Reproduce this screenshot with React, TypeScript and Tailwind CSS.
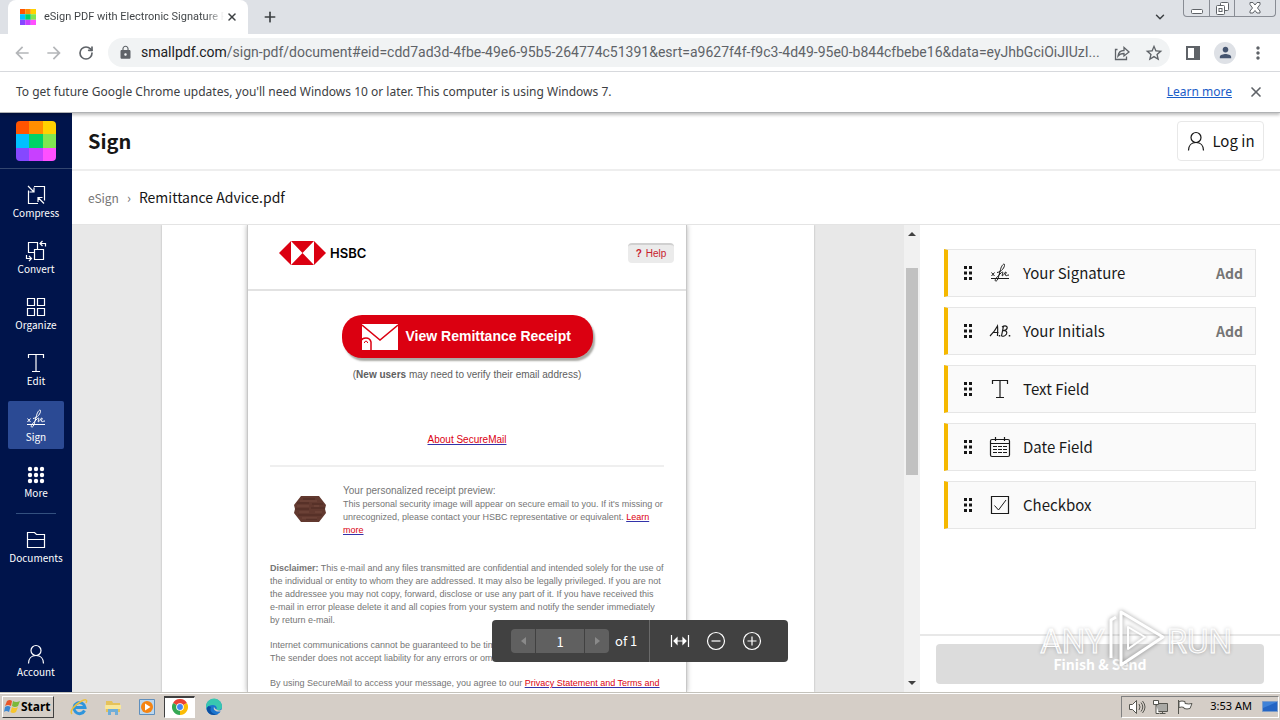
import type { ReactNode } from 'react';
import { ChevronDown, Plus, RotateCw, X } from 'lucide-react';
import { MdArrowBack, MdArrowForward, MdLock, MdMoreVert, MdPerson, MdStarBorder } from 'react-icons/md';

const ICON = {
  fill: 'none',
  stroke: 'currentColor',
  strokeWidth: 1.2,
  viewBox: '0 0 20 20',
};

const CompressIcon = () => (
  <svg {...ICON} className="h-5 w-5">
    <path d="M8 1.500h10.500v14M12 18.500H2.500V5.500M2 1l6 6M8 2.500V7H3.500M18 18.500l-6-6M12 17v-4.500h4.500" />
  </svg>
);

const ConvertIcon = () => (
  <svg {...ICON} viewBox="0 0 22 22" className="h-[22px] w-[22px]">
    <path d="M9.500 12.500H3.500v-10h9v7M9.500 9.500h9v10h-9zM20.500 6.500v-3h-5M17.500 1l-2.500 2.500L17.500 6M1.500 15v3.500H6M4 16l2.500 2.500L4 21" />
  </svg>
);

const OrganizeIcon = () => (
  <svg {...ICON} className="h-5 w-5">
    <path d="M1.500 1.500h7v7h-7zM11.500 1.500h7v7h-7zM1.500 11.500h7v7h-7zM11.500 11.500h7v7h-7z" />
  </svg>
);

const TextIcon = () => (
  <svg {...ICON} className="h-5 w-5">
    <path d="M2.500 5V1.500h15V5M10 1.500v17M6 18.500h8" />
  </svg>
);

const SignIcon = () => (
  <svg {...ICON} strokeWidth={1} className="h-5 w-5">
    <path d="M1 15.500h18M1.500 9.500l3 3.500M4.500 9.500l-3 3.500" />
    <path d="M7 9.500c4.500-.5 8-5.500 7.500-8-.5-1.500-3 1-4 5L8.500 14c-.7 3-2 4.500-3 4-1-1 .5-3 3-5.500l3-3c1.500-1 1.800 0 1 1.500s-.5 2 .5 1.500c1.500-1 2-4 3-3.500s-1.500 3-.3 3.500 1.300-.5 3.300-.5" />
  </svg>
);

const MoreIcon = () => (
  <svg viewBox="0 0 20 20" fill="currentColor" className="h-5 w-5">
    {[4, 10, 16].map((y) => [4, 10, 16].map((x) => <circle key={`${x}-${y}`} cx={x} cy={y} r="2.200" />))}
  </svg>
);

const FolderIcon = () => (
  <svg {...ICON} className="h-5 w-5">
    <path d="M1.500 17.500v-15h7l2 2h8v13zM1.500 9.500h17" />
  </svg>
);

const UserIcon = () => (
  <svg {...ICON} className="h-5 w-5">
    <circle cx="10" cy="6.500" r="5" />
    <path d="M2.500 19.500c0-5 3-8 7.500-8s7.500 3 7.500 8" />
  </svg>
);

const InitialsIcon = () => (
  <svg {...ICON} viewBox="0 0 22 20" className="h-5 w-[22px]">
    <path d="M1 15C4 12 7 8 8.500 5c.5 4 0 7 0 10M3.500 11.500h6M14.500 5l-2 10M13 6c3-2 6-1 5 1.500-.5 1.500-2.500 2-4 2 3 0 4.500 1 3.500 3.500-1 2-3.500 2.500-5 2" />
    <path d="M10.500 14v1.500M20.500 14v1.500" strokeWidth="1.500" />
  </svg>
);

const DateIcon = () => (
  <svg {...ICON} viewBox="0 0 22 22" className="h-[22px] w-[22px]">
    <rect x="1.500" y="3.500" width="19" height="17" rx="1.500" />
    <path d="M1.500 7.500h19M6.500 1v4M15.500 1v4" />
    <path d="M4 10.500h14M4 13.500h14M4 16.500h14" strokeDasharray="4 1" />
  </svg>
);

const CheckIcon = () => (
  <svg {...ICON} className="h-5 w-5">
    <path d="M1.500 1.500h17v17h-17z" />
    <path d="M4.500 10.500l4 4.500 7.500-10" strokeWidth="1" />
  </svg>
);

const SmallpdfLogo = ({ className }: { className: string }) => (
  <svg viewBox="0 0 40 40" className={className}>
    <path fill="#ff5400" d="M0 0h13v13H0z" />
    <path fill="#ff8e00" d="M13 0h14v13H13z" />
    <path fill="#ffd200" d="M27 0h13v13H27z" />
    <path fill="#00c0ff" d="M0 13h13v14H0z" />
    <path fill="#00d267" d="M13 13h14v14H13z" />
    <path fill="#81e650" d="M27 13h13v14H27z" />
    <path fill="#8548ff" d="M0 27h13v13H0z" />
    <path fill="#c840ff" d="M13 27h14v13H13z" />
    <path fill="#ff50ff" d="M27 27h13v13H27z" />
  </svg>
);

function TabStrip() {
  return (
    <div className="flex h-[34px] items-start bg-[#dee1e6] pl-2">
      <div className="flex h-full w-60 items-center rounded-t-lg bg-white pr-2 pl-3">
        <SmallpdfLogo className="h-4 w-4 shrink-0" />
        <span className="ml-2 flex-1 overflow-hidden bg-linear-to-r from-[#3c4043] from-90% to-transparent bg-clip-text text-[11px] whitespace-nowrap text-transparent">
          eSign PDF with Electronic Signature F
        </span>
        <button aria-label="Close tab" className="p-0.5 text-[#3c4043]">
          <X size={12} strokeWidth={3} />
        </button>
      </div>
      <button aria-label="New tab" className="ml-3 flex h-[34px] w-5 items-center justify-center text-[#3c4043]">
        <Plus size={16} strokeWidth={2.5} />
      </button>
      <button aria-label="Search tabs" className="mr-4 ml-auto flex h-[34px] items-center text-[#3c4043]">
        <ChevronDown size={14} strokeWidth={2.5} />
      </button>
      <div className="mr-1 flex h-[17px] w-[93px] rounded-b border border-t-0 border-[#888c94] text-[#5f6368]">
        <button aria-label="Minimize" className="flex w-[26px] items-end justify-center border-r border-[#888c94] pb-0.5">
          <svg viewBox="0 0 12 5" className="h-[5px] w-3" fill="#fff" stroke="currentColor">
            <rect x=".5" y=".5" width="11" height="4" rx="1" />
          </svg>
        </button>
        <button aria-label="Restore" className="flex w-[25px] items-center justify-center border-r border-[#888c94]">
          <svg viewBox="0 0 13 13" className="h-[13px] w-[13px]" fill="#fff" stroke="currentColor">
            <rect x="4.500" y=".5" width="8" height="8" rx="1" />
            <rect x=".5" y="3.500" width="8" height="9" rx="1" />
            <rect x="3" y="6.500" width="3" height="3" />
          </svg>
        </button>
        <button aria-label="Close" className="flex flex-1 items-center justify-center">
          <svg viewBox="0 0 12 12" className="h-3 w-3" fill="#fff" stroke="currentColor">
            <path d="M1 .5h3l2 2.500 2-2.500h3v2L8.500 6 11 9v2H8L6 8.500 4 11H1V9l2.500-3L1 2.500z" />
          </svg>
        </button>
      </div>
    </div>
  );
}

function AddressBar() {
  return (
    <div className="flex h-[38px] items-center border-b border-[#dadce0] bg-white px-3 text-[#5f6368]">
      <button aria-label="Back" className="text-[#b4b6b9]"><MdArrowBack size={20} /></button>
      <button aria-label="Forward" className="ml-3 text-[#b4b6b9]"><MdArrowForward size={20} /></button>
      <button aria-label="Reload" className="ml-3.5"><RotateCw size={16} strokeWidth={2.5} /></button>
      <label className="ml-3.5 flex h-[29px] min-w-0 flex-1 items-center rounded-full bg-[#f1f3f4] pr-1.5 pl-2.5 text-[14px]">
        <MdLock size={15} className="shrink-0" />
        <span className="ml-2 text-[#202124]">smallpdf.com</span>
        <input
          type="text"
          aria-label="Address"
          className="min-w-0 flex-1 truncate bg-transparent outline-none"
          defaultValue="/sign-pdf/document#eid=cdd7ad3d-4fbe-49e6-95b5-264774c51391&esrt=a9627f4f-f9c3-4d49-95e0-b844cfbebe16&data=eyJhbGciOiJIUzI..."
        />
        <button aria-label="Share" className="ml-2">
          <svg viewBox="0 0 16 16" className="h-4 w-4" fill="none" stroke="currentColor" strokeWidth="1.300">
            <path d="M3.500 4.500H1.500v10h11v-3M4 11c.5-4 3-5.500 6-5.500V2.500L15 7l-5 4V8.500c-3 0-4.500.5-6 2.500z" />
          </svg>
        </button>
        <button aria-label="Bookmark" className="ml-3.5"><MdStarBorder size={20} /></button>
      </label>
      <button aria-label="Side panel" className="ml-4">
        <svg viewBox="0 0 14 14" className="h-3.5 w-3.5">
          <path d="M1 1h12v12H1z" fill="none" stroke="currentColor" strokeWidth="2" />
          <path d="M8 1h5v12H8z" fill="currentColor" />
        </svg>
      </button>
      <button aria-label="Profile" className="ml-3.5 flex h-[22px] w-[22px] items-center justify-center rounded-full bg-[#dee1e6] text-[#44546f]">
        <MdPerson size={17} />
      </button>
      <button aria-label="Menu" className="ml-3"><MdMoreVert size={20} /></button>
    </div>
  );
}

function InfoBar() {
  return (
    <div className="relative z-10 flex h-[41px] items-center border-b border-[#b0b2b4] bg-white px-4 font-['Noto_Sans',sans-serif] text-[12px] text-[#3c4043] shadow-[0_2px_3px_rgba(0,0,0,0.25)]">
      <span>To get future Google Chrome updates, you'll need Windows 10 or later. This computer is using Windows 7.</span>
      <a href="#learn" className="ml-auto text-[#1a5dc8] underline">Learn more</a>
      <button aria-label="Dismiss" className="ml-4 text-[#5f6368]"><X size={16} strokeWidth={2.5} /></button>
    </div>
  );
}

function NavItem({ icon, label, active }: { icon: ReactNode; label: string; active?: boolean }) {
  return (
    <a
      href="#tool"
      className={`flex h-12 w-14 flex-col items-center rounded-xs pt-2 text-[10px] leading-4 ${active ? 'bg-[#2b4a94]' : ''}`}
    >
      <span className="flex h-5 items-center">{icon}</span>
      <span>{label}</span>
    </a>
  );
}

function Sidebar() {
  return (
    <nav className="flex w-[72px] shrink-0 flex-col items-center bg-[#00144b] pb-2 text-white">
      <div className="flex h-14 w-full shrink-0 items-center justify-center border-b border-[#33466f]">
        <SmallpdfLogo className="h-10 w-10 rounded" />
      </div>
      <div className="mt-2 flex flex-col gap-2">
        <NavItem icon={<CompressIcon />} label="Compress" />
        <NavItem icon={<ConvertIcon />} label="Convert" />
        <NavItem icon={<OrganizeIcon />} label="Organize" />
        <NavItem icon={<TextIcon />} label="Edit" />
        <NavItem icon={<SignIcon />} label="Sign" active />
        <NavItem icon={<MoreIcon />} label="More" />
      </div>
      <div className="my-2 h-px w-10 shrink-0 bg-[#33507f]" />
      <NavItem icon={<FolderIcon />} label="Documents" />
      <div className="mt-auto">
        <NavItem icon={<UserIcon />} label="Account" />
      </div>
    </nav>
  );
}

const MAIL_LINK = 'text-[#db0011] underline decoration-[#3333aa]';

function Mail() {
  return (
    <article className="mx-auto h-full w-[440px] overflow-hidden border-x border-[#c8c8c8] bg-white font-['Liberation_Sans',sans-serif] text-[9px] leading-[13px] text-[#757575] shadow-[0_0_5px_rgba(0,0,0,0.3)]">
      <header className="flex h-[66px] items-center border-b-2 border-[#e2e2e2] pr-3 pb-2 pl-[31px]">
        <svg viewBox="0 0 47 24" className="h-6 w-[47px]">
          <path fill="#db0011" d="M0 12L12 0h23l12 12-12 12H12z" />
          <path fill="#fff" d="M12 0v24l11.500-12zM35 0v24L23.500 12z" />
        </svg>
        <span className="ml-1 font-['Inter',sans-serif] text-[13px] font-semibold text-black">HSBC</span>
        <button className="ml-auto flex h-5 w-[46px] items-center justify-center gap-1 rounded-sm border-t-2 border-[#d0d0d0] bg-[#ebebeb] pb-0.5 text-[10px] text-[#c8202c]">
          <b>?</b> Help
        </button>
      </header>

      <div className="flex flex-col items-center">
        <button className="mt-6 flex h-[43px] w-[251px] items-center rounded-[20px] bg-[#db0011] pl-5 text-[14px] font-bold text-white shadow-[2px_3px_2px_#aaaaa5]">
          <svg viewBox="0 0 36 26" className="mr-2 h-[26px] w-9">
            <path fill="#fff" d="M0 0h36v26H0z" />
            <path fill="none" stroke="#db0011" strokeWidth="1.500" d="M0 1l18 15L36 1" />
            <path fill="#fff" stroke="#db0011" strokeWidth="1.500" d="M-1 27V17q1-3 5-3t5 4v9z" />
            <path fill="none" stroke="#db0011" d="M2.500 19v-1q1.500-2 3 0v1" />
          </svg>
          View Remittance Receipt
        </button>
        <p className="mt-2.5 text-[10px] text-[#606060]">
          (<b>New users</b> may need to verify their email address)
        </p>
        <a href="#about" className={`mt-[52px] text-[10px] ${MAIL_LINK}`}>About SecureMail</a>
      </div>

      <div className="mx-[22px] mt-[19px] border-t-2 border-[#efefef] pt-[17px]">
        <div className="flex items-start">
          <svg viewBox="0 0 32 26" className="mt-3 ml-6 h-[26px] w-8">
            <path fill="#62392f" d="M7 0h18l7 9-1 4 1 4-7 9H7l-7-9 1-4-1-4z" />
            <path fill="none" stroke="#4c2a22" d="M3 7h12M18 8h11M1 13h14M17 12h14M4 19h24M9 3h12M12 23h11" />
            <path fill="none" stroke="#744a3f" d="M6 5h17M3 10h12M20 10h5M5 16h10M21 16h7M8 22h15" />
          </svg>
          <p className="ml-[17px] whitespace-nowrap">
            <span className="text-[10px]">Your personalized receipt preview:</span>
            <br />
            This personal security image will appear on secure email to you. If it's missing or
            <br />
            unrecognized, please contact your HSBC representative or equivalent.{' '}
            <a href="#preview" className={MAIL_LINK}>Learn<br />more</a>
          </p>
        </div>
        <p className="mt-[25px] whitespace-nowrap">
          <b>Disclaimer:</b> This e-mail and any files transmitted are confidential and intended solely for the use of
          <br />
          the individual or entity to whom they are addressed. It may also be legally privileged. If you are not
          <br />
          the addressee you may not copy, forward, disclose or use any part of it. If you have received this
          <br />
          e-mail in error please delete it and all copies from your system and notify the sender immediately
          <br />
          by return e-mail.
        </p>
        <p className="mt-3 whitespace-nowrap">
          Internet communications cannot be guaranteed to be timely, secure, error or virus-free.
          <br />
          The sender does not accept liability for any errors or omissions.
        </p>
        <p className="mt-3 whitespace-nowrap">
          By using SecureMail to access your message, you agree to our{' '}
          <a href="#terms" className={MAIL_LINK}>Privacy Statement and Terms and</a>
        </p>
      </div>
    </article>
  );
}

function Viewer() {
  return (
    <div className="flex min-w-0 flex-1 bg-[#e8e8e8]">
      <div className="flex flex-1 justify-center overflow-hidden">
        <div className="h-full w-[652px] bg-white pr-[42px] shadow-[0_0_2px_rgba(0,0,0,0.25)]">
          <Mail />
        </div>
      </div>
      <div className="flex w-4 flex-col items-center bg-[#f1f1f1] py-1.5">
        <svg viewBox="0 0 8 5" className="h-[5px] w-2"><path fill="#404040" d="M0 5l4-4 4 4z" /></svg>
        <div className="mt-8 h-[207px] w-3 bg-[#c1c1c1]" />
        <svg viewBox="0 0 8 5" className="mt-auto h-[5px] w-2"><path fill="#404040" d="M0 0l4 4 4-4z" /></svg>
      </div>
    </div>
  );
}

function PageControls() {
  return (
    <div className="absolute inset-x-0 bottom-[30px] flex justify-center">
      <div className="flex h-[42px] w-[296px] items-center rounded bg-[#414141] pl-[19px] text-[13px] text-white">
        <button aria-label="Previous page" className="flex h-6 w-6 items-center justify-center rounded-l-sm bg-[#606060]">
          <svg viewBox="0 0 5 8" className="h-2 w-[5px]"><path fill="#8a8a8a" d="M5 0v8L0 4z" /></svg>
        </button>
        <input aria-label="Page" defaultValue="1" className="mx-px h-6 w-12 bg-[#606060] text-center outline-none" />
        <button aria-label="Next page" className="flex h-6 w-6 items-center justify-center rounded-r-sm bg-[#606060]">
          <svg viewBox="0 0 5 8" className="h-2 w-[5px]"><path fill="#8a8a8a" d="M0 0v8l5-4z" /></svg>
        </button>
        <span className="ml-1.5 w-7">of 1</span>
        <div className="mr-5 ml-1.5 h-full w-px bg-[#6a6a6a]" />
        <button aria-label="Fit width">
          <svg viewBox="0 0 20 20" className="h-5 w-5" fill="none" stroke="currentColor" strokeWidth="1.200">
            <path d="M1.500 4v12M18.500 4v12M4 10h12" />
            <path fill="currentColor" d="M7 7v6l-3-3zM13 7v6l3-3z" />
          </svg>
        </button>
        <button aria-label="Zoom out" className="ml-4">
          <svg viewBox="0 0 20 20" className="h-5 w-5" fill="none" stroke="currentColor" strokeWidth="1.200">
            <circle cx="10" cy="10" r="8.500" />
            <path d="M5.500 10h9" />
          </svg>
        </button>
        <button aria-label="Zoom in" className="ml-4">
          <svg viewBox="0 0 20 20" className="h-5 w-5" fill="none" stroke="currentColor" strokeWidth="1.200">
            <circle cx="10" cy="10" r="8.500" />
            <path d="M5.500 10h9M10 5.500v9" />
          </svg>
        </button>
      </div>
    </div>
  );
}

function FieldCard({ icon, label, add }: { icon: ReactNode; label: string; add?: boolean }) {
  return (
    <div className="flex h-12 items-center border border-l-4 border-[#e6e6e6] border-l-[#f5b800] bg-[#fafafa] pr-3 pl-[15px] text-[15px] text-[#1a1a1a]">
      <svg viewBox="0 0 10 14" className="h-3.5 w-2.5" fill="#161616">
        <path d="M1 0h3v3H1zM6 0h3v3H6zM1 5.500h3v3H1zM6 5.500h3v3H6zM1 11h3v3H1zM6 11h3v3H6z" />
      </svg>
      <span className="mr-3 ml-4 flex w-[22px] justify-center">{icon}</span>
      {label}
      {add && <button className="ml-auto text-[14px] font-bold text-[#757575]">Add</button>}
    </div>
  );
}

function SignPanel() {
  return (
    <aside className="flex w-[360px] shrink-0 flex-col bg-white">
      <div className="flex flex-1 flex-col gap-2.5 px-6 pt-6">
        <FieldCard icon={<SignIcon />} label="Your Signature" add />
        <FieldCard icon={<InitialsIcon />} label="Your Initials" add />
        <FieldCard icon={<TextIcon />} label="Text Field" />
        <FieldCard icon={<DateIcon />} label="Date Field" />
        <FieldCard icon={<CheckIcon />} label="Checkbox" />
      </div>
      <div className="border-t-2 border-[#e8e8e8] px-4 py-2">
        <button className="h-10 w-full rounded bg-[#dcdcdc] text-[14px] font-bold text-white">Finish &amp; Send</button>
      </div>
    </aside>
  );
}

function Watermark() {
  return (
    <div className="pointer-events-none absolute right-12 bottom-[18px] flex items-center gap-0.5 font-['Roboto',sans-serif] text-[33px] leading-none text-white/40 [-webkit-text-stroke:1px_#ffffff] [text-shadow:0_0_4px_rgba(0,0,0,0.3)]">
      <span>ANY</span>
      <svg viewBox="0 0 58 66" className="h-[66px] w-[58px] drop-shadow-[0_0_2px_rgba(0,0,0,0.4)]" fill="none" stroke="#fff" strokeWidth="3" strokeLinejoin="round">
        <path d="M14 4l42 25-42 28z" />
        <path d="M21 19l17 10-17 12z" strokeWidth="2" />
        <path d="M9 9l-5 3v38" />
      </svg>
      <span>RUN</span>
    </div>
  );
}

function Taskbar() {
  return (
    <footer className="flex h-7 shrink-0 items-center border-t border-[#c4c2bb] bg-[#d5cec7] pl-0.5 text-[12px] text-black shadow-[inset_0_1px_0_#ffffff]">
      <button className="flex h-[22px] w-[52px] items-center border border-t-white border-r-[#404040] border-b-[#404040] border-l-white pl-px font-['Noto_Sans',sans-serif] text-[12px] font-bold">
        <svg viewBox="0 0 16 16" className="mr-px h-4 w-4 shrink-0">
          <path fill="#e8562a" d="M3 2q3-2 5 0L7 7Q4 5 1 7z" />
          <path fill="#7bb83a" d="M9 2q3 2 7 0l-2 5q-3 2-6 0z" />
          <path fill="#3c87d2" d="M1 8q3-2 5.500 0L5 13q-3-2-5 0z" />
          <path fill="#f7c52c" d="M8 8q3 2 6 0l-2 5q-3 2-5.500 0z" />
        </svg>
        Start
      </button>
      <button aria-label="Internet Explorer" className="ml-4">
        <svg viewBox="0 0 18 18" className="h-[18px] w-[18px]" fill="none">
          <path stroke="#2f95dc" strokeWidth="3" d="M14.500 12.500A5.500 5.500 0 1 1 15 9.500H5" />
          <path stroke="#edc03c" strokeWidth="1.500" d="M2 16c-3-3 3-9 8-12s8-3 6 1" />
        </svg>
      </button>
      <button aria-label="Explorer" className="ml-4">
        <svg viewBox="0 0 18 18" className="h-[18px] w-[18px]">
          <path fill="#e5c25a" d="M2 3h6l1 2h7v9H2z" />
          <path fill="#f8e79a" d="M1 7h16v4H1z" />
          <path fill="#6faed8" d="M4 17v-6h10v6h-3v-3H7v3z" />
        </svg>
      </button>
      <button aria-label="Media Player" className="ml-4">
        <svg viewBox="0 0 18 18" className="h-[18px] w-[18px]">
          <path fill="#bcd7ee" stroke="#5f8fbd" d="M1.500 1.500h15v15h-15z" />
          <circle cx="9" cy="9" r="6" fill="#f58412" />
          <path fill="#fff" d="M7 5.500v7L12.500 9z" />
        </svg>
      </button>
      <button aria-label="Chrome" className="ml-2 flex h-[22px] w-[31px] items-center justify-center border border-t-2 border-[#404040] border-r-white border-b-white bg-white">
        <svg viewBox="0 0 18 18" className="h-4 w-4">
          <path fill="#ea4335" d="M9 9L1.200 4.500a9 9 0 0 1 15.600 0z" />
          <path fill="#fbbc05" d="M9 9l7.800-4.500A9 9 0 0 1 9 18z" />
          <path fill="#34a853" d="M9 9v9A9 9 0 0 1 1.200 4.500z" />
          <circle cx="9" cy="9" r="4.300" fill="#fff" />
          <circle cx="9" cy="9" r="3.300" fill="#4285f4" />
        </svg>
      </button>
      <button aria-label="Edge" className="ml-2.5">
        <svg viewBox="0 0 18 18" className="h-[18px] w-[18px]">
          <circle cx="9" cy="9" r="8" fill="#1b75cf" />
          <path fill="#38c7b0" d="M1 8a8 8 0 0 1 16 1c0 3-4 4-6 3 2-2 0-5-3-5-3 0-6 1-7 4z" />
          <path fill="#0c4fa0" d="M6 9c-2 4 2 8 7 7-6 3-12-1-11-6 1-2 2-2 4-1z" />
          <path fill="#d5cec7" d="M9 9c-1 2 1 5 5 4.500h3l1-3c-2 3-7 2.500-9-1.500z" />
        </svg>
      </button>
      <div className="mr-px ml-auto flex h-[22px] items-center border border-t-[#808080] border-r-white border-b-white border-l-[#808080] pl-1.5">
        <svg viewBox="0 0 66 18" className="h-[18px] w-[66px]" fill="#fff" stroke="#55554f">
          <path d="M1.500 6.500h3l4-4v13l-4-4h-3z" />
          <path fill="none" d="M11 6q2 3 0 6M13 4.500q3.500 4.500 0 9M14.500 3q5 6 0 12" />
          <path fill="#a9a9a5" d="M28.500 5.500h11v8h-11zM31.500 15.500h6M34.500 13.500v2" />
          <path d="M25.500 2.500h5v4h-5zM28 6.500v9h3" />
          <path fill="none" d="M50.500 2v14" />
          <path d="M51 3.500q3-1 6 0v2q4 1 7 0l-2 5q-3 1-6 0v-1q-2-1-5 0z" />
        </svg>
        <span className="mr-2.5 ml-4 whitespace-nowrap font-['Noto_Sans',sans-serif] text-[11px]">3:53 AM</span>
        <svg viewBox="0 0 16 14" className="h-3.5 w-4">
          <path fill="#2465c4" stroke="#7c9cc8" d="M.5 1.500h15v10H.5z" />
          <path fill="#3f82d8" d="M1 2h14L1 8z" />
        </svg>
      </div>
    </footer>
  );
}

export default function App() {
  return (
    <div className="flex h-screen flex-col overflow-hidden bg-white font-['Roboto',sans-serif]">
      <TabStrip />
      <AddressBar />
      <InfoBar />
      <div className="relative flex min-h-0 flex-1 font-['Noto_Sans_CJK_SC',sans-serif]">
        <Sidebar />
        <div className="flex min-w-0 flex-1 flex-col">
          <header className="flex h-[58px] shrink-0 items-center justify-between border-b-2 border-[#eeeeee] px-4">
            <h1 className="text-[20px] font-bold text-[#161616]">Sign</h1>
            <button className="flex h-10 w-[87px] items-center justify-center gap-1.5 rounded border border-[#e8e8e8] text-[15px] text-[#161616]">
              <UserIcon />
              Log in
            </button>
          </header>
          <div className="flex h-[54px] shrink-0 items-center border-b border-[#e4e4e4] px-4 text-[#161616]">
            <a href="#esign" className="text-[12px] text-[#757575]">eSign</a>
            <span className="mx-2 text-[13px] text-[#757575]">›</span>
            <span className="text-[14px]">Remittance Advice.pdf</span>
          </div>
          <main className="flex min-h-0 flex-1">
            <Viewer />
            <SignPanel />
          </main>
        </div>
        <PageControls />
        <Watermark />
      </div>
      <Taskbar />
    </div>
  );
}
